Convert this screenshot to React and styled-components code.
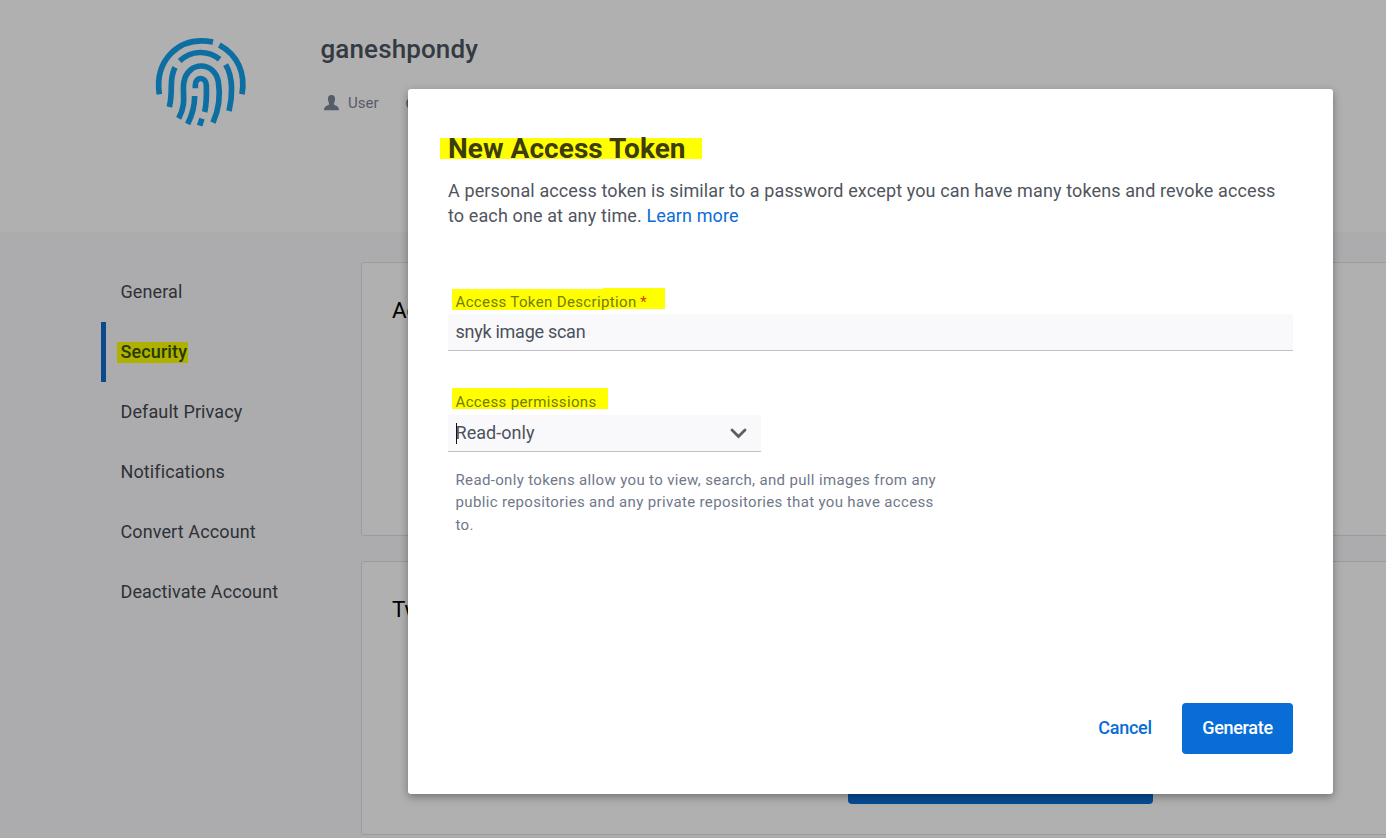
import React from "react";
import styled, { createGlobalStyle } from "styled-components";

const GlobalStyle = createGlobalStyle`
  * { box-sizing: border-box; }
  html, body { margin: 0; height: 838px; overflow: hidden; }
  body { font-family: Roboto, "Liberation Sans", sans-serif; background: #f8f9fb; }
  h1, h2, p { margin: 0; }
`;

const Page = styled.div`
  position: relative;
  width: 1386px;
  height: 838px;
  overflow: hidden;
  display: flex;
  flex-direction: column;
  background: #f7f7fa;
`;

const Header = styled.header`
  display: flex;
  height: 232px;
  padding: 25px 0 0 140px;
  gap: 60.5px;
  background: #fdfdfd;
`;

const ProfileName = styled.h1`
  margin-top: 8px;
  font-size: 26px;
  line-height: 32px;
  font-weight: 500;
  letter-spacing: 0.12px;
  color: #4b535f;
`;

const Meta = styled.div`
  display: flex;
  align-items: center;
  margin: 28px 0 0 3.5px;
  height: 20px;
  font-size: 15px;
  color: #7c8495;
  svg:last-child { margin-left: 27px; }
`;

const MetaText = styled.span`
  margin-left: 9px;
`;

const Content = styled.div`
  display: flex;
  flex: 1;
`;

const Nav = styled.nav`
  display: flex;
  flex: none;
  flex-direction: column;
  width: 260px;
  margin: 30px 0 0 101px;
`;

const NavItem = styled.a`
  display: flex;
  align-items: center;
  height: 60px;
  padding-bottom: 2px;
  padding-left: ${(p) => (p.$active ? "11px" : "15.5px")};
  border-left: ${(p) => (p.$active ? "5px solid #0f6ac8" : "4px solid transparent")};
  font-size: 18px;
  font-weight: ${(p) => (p.$active ? 500 : 400)};
  letter-spacing: 0.11px;
  color: ${(p) => (p.$active ? "#365300" : "#43484f")};
`;

const NavMark = styled.span`
  margin-top: 2px;
  padding: 0 1px 1px 3.5px;
  line-height: 20px;
  background: #fdfd00;
`;

const Panels = styled.main`
  display: flex;
  flex-direction: column;
  gap: 25px;
  flex: none;
  width: 1100px;
  padding-top: 30px;
`;

const Panel = styled.section`
  display: flex;
  flex-direction: column;
  height: 274px;
  padding: 31px 30px 30px;
  border: 1px solid #dedfe3;
  border-radius: 3px;
  background: #fdfdfd;
`;

const PanelTitle = styled.h2`
  font-size: 22.5px;
  line-height: 32px;
  font-weight: 400;
  letter-spacing: -0.3px;
  white-space: nowrap;
  color: #000;
`;

const PanelButton = styled.button`
  width: 305px;
  height: 50px;
  margin: auto 0 0 456px;
  border: 0;
  border-radius: 4px;
  background: #086dd7;
`;

const Backdrop = styled.div`
  position: absolute;
  inset: 0;
  padding: 89px 0 0 408px;
  background: rgba(0, 0, 0, 0.3);
`;

const Dialog = styled.div`
  display: flex;
  flex-direction: column;
  width: 925px;
  height: 705px;
  padding: 40px;
  border-radius: 3px;
  background: #fff;
  box-shadow: 0 3px 8px rgba(0, 0, 0, 0.35);
`;

const DialogTitle = styled.h2`
  display: flex;
  align-items: center;
  width: 262px;
  height: 21px;
  margin: 9px 0 0 -8px;
  padding-left: 8px;
  background: #ff0;
  font-size: 28px;
  font-weight: 700;
  letter-spacing: 0.05px;
  white-space: nowrap;
  color: #3c3c0c;
`;

const Intro = styled.p`
  margin-top: 19px;
  font-size: 18px;
  line-height: 25px;
  letter-spacing: 0.118px;
  white-space: nowrap;
  color: #50545d;
`;

const Link = styled.a`
  color: #086dd7;
`;

const Label = styled.label`
  display: flex;
  align-items: center;
  gap: 4px;
  align-self: flex-start;
  width: ${(p) => p.$width}px;
  height: ${(p) => p.$height}px;
  margin: ${(p) => p.$top}px 0 ${(p) => p.$bottom}px 4px;
  padding: 6px 0 0 3.5px;
  background: ${(p) =>
    p.$uneven
      ? "linear-gradient(#ff0, #ff0) 0 100% / 156px 21px no-repeat, linear-gradient(#ff0, #ff0) 100% 0 / 62px 21px no-repeat"
      : "#ff0"};
  font-size: 15px;
  letter-spacing: 0.36px;
  white-space: nowrap;
  color: #737b0a;
`;

const Required = styled.span`
  margin-left: -0.5px;
  color: #e0350b;
`;

const Field = styled.div`
  display: flex;
  align-items: center;
  justify-content: space-between;
  width: ${(p) => p.$width}px;
  height: 37px;
  padding: 0 14px 2px 7.5px;
  border-bottom: 1px solid #bfbfc4;
  background: #f9f9fb;
  font-size: 18px;
  letter-spacing: ${(p) => p.$track ?? 0.04}px;
  color: #4c515b;
  svg { position: relative; top: 1px; }
`;

const Caret = styled.span`
  position: absolute;
  width: 1px;
  height: 21px;
  margin: 2px 0 0 0.5px;
  background: #111;
`;

const Help = styled.p`
  margin: 17px 0 0 7.5px;
  font-size: 15px;
  line-height: 22.4px;
  letter-spacing: 0.345px;
  white-space: nowrap;
  color: #70788a;
`;

const Actions = styled.div`
  display: flex;
  justify-content: flex-end;
  gap: 10px;
  margin-top: auto;
`;

const Button = styled.button`
  width: ${(p) => p.$width}px;
  height: 51px;
  padding: 0 0 2px;
  border: 0;
  border-radius: 4px;
  font: 500 18px Roboto, "Liberation Sans", sans-serif;
  letter-spacing: ${(p) => (p.$primary ? -0.3 : -0.25)}px;
  background: ${(p) => (p.$primary ? "#086dd7" : "transparent")};
  color: ${(p) => (p.$primary ? "#fff" : "#086dd7")};
`;

function Fingerprint() {
  return (
    <svg width="120" height="115" viewBox="0 0 360 345" fill="none" stroke="#149ee9" strokeWidth="17">
      <path d="M58 208C43 106 116 31 219 51M238 60C293 90 317 144 306 208" />
      <path d="M119 108C154 75 204 75 239 103" />
      <path d="M105 127C89 158 96 180 93 211Q92 230 88 246M257 119C281 159 277 217 267 258" />
      <path d="M116 280C142 232 125 204 132 170C144 108 223 107 235 170C242 212 236 254 219 293" />
      <path d="M166 190V180C166 154 198 154 199 181C200 213 200 235 194 261M164 213Q164 255 143 297" />
      <path d="M186 281L179 302" />
    </svg>
  );
}

export default function App() {
  return (
    <Page>
      <GlobalStyle />
      <Header>
        <Fingerprint />
        <div>
          <ProfileName>ganeshpondy</ProfileName>
          <Meta>
            <svg width="15" height="16" viewBox="0 0 15 16" fill="#7c8495">
              <path d="M7.5 0C4.8 0 3.7 2 4 4.5C4.2 7 5.1 7.6 5.1 9.2C5.1 10.7 0 10 0 15.2H15C15 10 9.9 10.7 9.9 9.2C9.9 7.6 10.8 7 11 4.5C11.3 2 10.2 0 7.5 0Z" />
            </svg>
            <MetaText>User</MetaText>
            <svg width="15" height="15" viewBox="0 0 15 15" fill="none" stroke="#7c8495" strokeWidth="1.6">
              <circle cx="7.5" cy="7.5" r="6.5" />
              <path d="M7.5 3.5V8L10 9.5" />
            </svg>
          </Meta>
        </div>
      </Header>
      <Content>
        <Nav>
          <NavItem>General</NavItem>
          <NavItem $active><NavMark>Security</NavMark></NavItem>
          <NavItem>Default Privacy</NavItem>
          <NavItem>Notifications</NavItem>
          <NavItem>Convert Account</NavItem>
          <NavItem>Deactivate Account</NavItem>
        </Nav>
        <Panels>
          <Panel>
            <PanelTitle>Ac</PanelTitle>
          </Panel>
          <Panel>
            <PanelTitle>Tw</PanelTitle>
            <PanelButton />
          </Panel>
        </Panels>
      </Content>
      <Backdrop>
        <Dialog>
          <DialogTitle>New Access Token</DialogTitle>
          <Intro>
            A personal access token is similar to a password except you can have many tokens and revoke access
            <br />
            to each one at any time. <Link>Learn more</Link>
          </Intro>
          <Label $width={213} $height={22} $top={60} $bottom={4} $uneven>
            Access Token Description <Required>*</Required>
          </Label>
          <Field $width={845} $track={-0.27}>snyk image scan</Field>
          <Label $width={156} $height={21} $top={37} $bottom={6}>Access permissions</Label>
          <Field $width={313}>
            <Caret />
            <span>Read-only</span>
            <svg width="17" height="11" viewBox="0 0 17 11" fill="none" stroke="#5c5d61" strokeWidth="2.8" strokeLinecap="round">
              <path d="M2 2L8.5 8.5L15 2" />
            </svg>
          </Field>
          <Help>
            Read-only tokens allow you to view, search, and pull images from any
            <br />
            public repositories and any private repositories that you have access
            <br />
            to.
          </Help>
          <Actions>
            <Button $width={94}>Cancel</Button>
            <Button $width={111} $primary>Generate</Button>
          </Actions>
        </Dialog>
      </Backdrop>
    </Page>
  );
}
